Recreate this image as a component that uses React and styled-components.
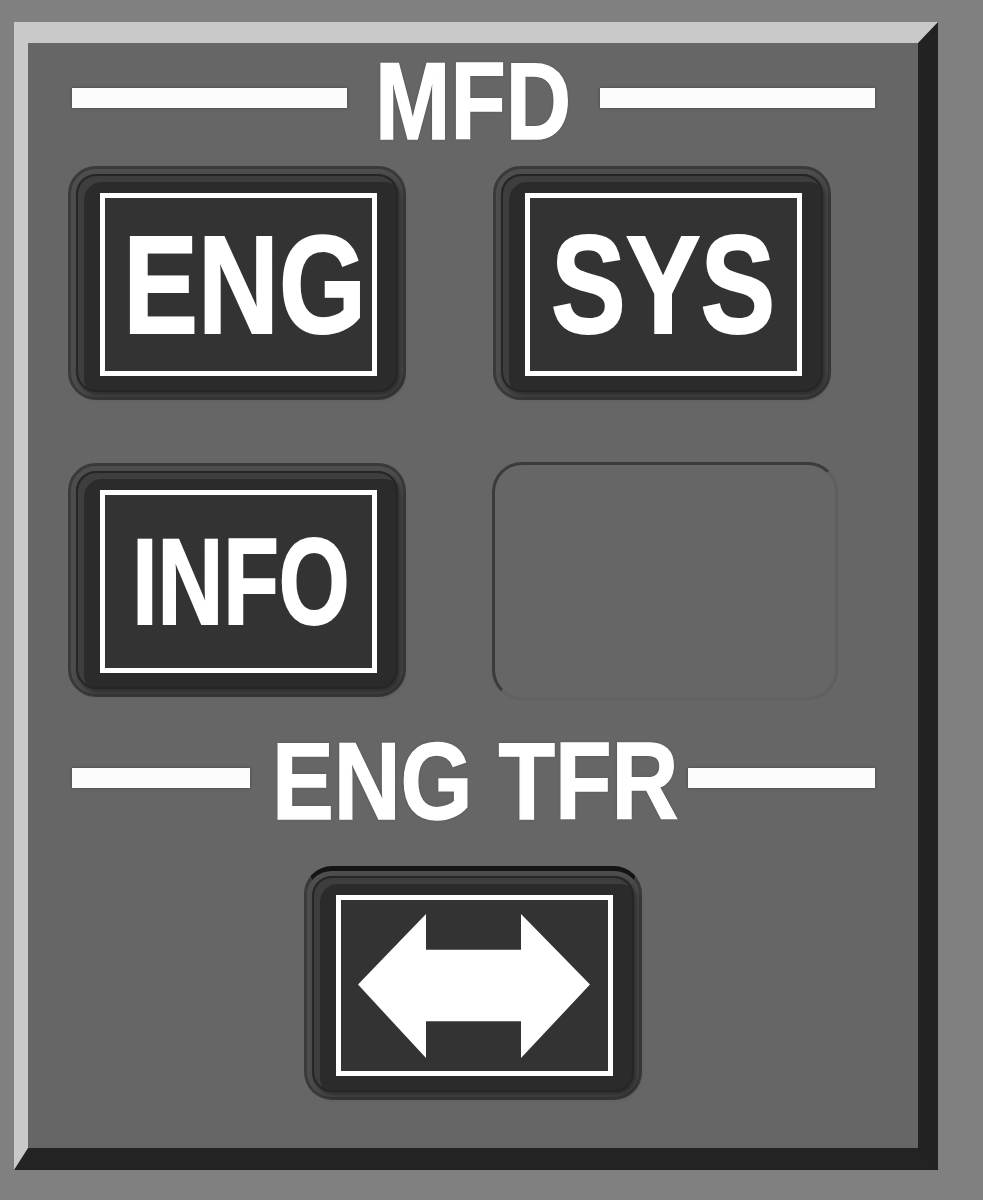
import styled, { createGlobalStyle } from "styled-components";

const GlobalStyle = createGlobalStyle`
  html, body {
    margin: 0;
    padding: 0;
    background: #808080;
  }
  body {
    font-family: "Liberation Sans", Arial, sans-serif;
  }
`;

const Panel = styled.div`
  box-sizing: border-box;
  width: 924px;
  height: 1148px;
  margin: 22px 0 0 14px;
  border-style: solid;
  border-width: 21px 20px 22px 14px;
  border-color: #c9c9c9 #222 #232323 #c9c9c9;
  background: #666;
  display: flex;
  flex-direction: column;
  padding-top: 19px;
`;

const Heading = styled.div`
  display: flex;
  align-items: center;
  height: 78px;
  padding: 0 43px 0 44px;
  margin-top: ${(p) => p.$top || 0}px;
`;

const Rule = styled.div`
  flex: 0 0 ${(p) => p.$w}px;
  height: 20px;
  margin-top: -7px;
  background: #fcfcfc;
  box-shadow: 0 0 3px rgba(0, 0, 0, 0.35);
`;

const TitleSlot = styled.div`
  flex: 1;
  min-width: 0;
  display: flex;
  justify-content: center;
`;

const Title = styled.span`
  font-size: 109px;
  line-height: 78px;
  font-weight: 700;
  color: #fff;
  white-space: nowrap;
  -webkit-text-stroke: 1.5px #fff;
  transform: translateX(${(p) => p.$shift || 0}px) scaleX(${(p) => p.$scale});
  text-shadow: 0 0 3px rgba(0, 0, 0, 0.4);
`;

const Keys = styled.div`
  display: grid;
  grid-template-columns: repeat(2, 338px);
  grid-auto-rows: 234px;
  column-gap: 87px;
  row-gap: 63px;
  padding-left: 40px;
  margin-top: 26px;
`;

const Bezel = styled.div`
  box-sizing: border-box;
  width: 338px;
  height: 234px;
  border-radius: 28px;
  border: 3px solid #3a3a3a;
  border-top: ${(p) => (p.$heavyTop ? "5px solid #141414" : "3px solid #3a3a3a")};
  padding: 5px;
  background: #4e4e4e;
  display: flex;
`;

const Body = styled.div`
  box-sizing: border-box;
  flex: 1;
  min-width: 0;
  display: flex;
  border-radius: 20px;
  border: 2px solid #262626;
  background: #2b2b2b;
  padding: 17px 19px 14px 22px;
  box-shadow: inset 6px 6px 0 #3e3e3e, 3px 4px 6px rgba(0, 0, 0, 0.45);
`;

const Frame = styled.div`
  box-sizing: border-box;
  flex: 1;
  min-width: 0;
  border: 5px solid #fff;
  background: #333;
  display: flex;
  align-items: center;
  justify-content: center;
  overflow: hidden;
`;

const Label = styled.span`
  font-size: ${(p) => p.$size}px;
  line-height: 1;
  font-weight: 700;
  color: #fff;
  white-space: nowrap;
  -webkit-text-stroke: 2px #fff;
  transform: translateX(${(p) => p.$shift || 0}px) scaleX(${(p) => p.$scale});
`;

const EmptySlot = styled.div`
  box-sizing: border-box;
  width: 346px;
  height: 238px;
  margin: -1px 0 0 -1px;
  border-radius: 30px;
  border: 3px solid;
  border-color: #3b3b3b #5f5f5f #616161 #3b3b3b;
`;

const TransferRow = styled.div`
  display: flex;
  justify-content: center;
  margin-top: 46px;
`;

const ArrowIcon = styled.svg`
  width: 100%;
  height: 100%;
  display: block;
`;

function Key({ children, heavyTop }) {
  return (
    <Bezel $heavyTop={heavyTop}>
      <Body>
        <Frame>{children}</Frame>
      </Body>
    </Bezel>
  );
}

export default function App() {
  return (
    <>
      <GlobalStyle />
      <Panel>
        <Heading>
          <Rule $w={275} />
          <TitleSlot>
            <Title $scale={0.83}>MFD</Title>
          </TitleSlot>
          <Rule $w={275} />
        </Heading>

        <Keys>
          <Key>
            <Label $size={140} $scale={0.8} $shift={6}>ENG</Label>
          </Key>
          <Key>
            <Label $size={140} $scale={0.8}>SYS</Label>
          </Key>
          <Key>
            <Label $size={123} $scale={0.74} $shift={2}>INFO</Label>
          </Key>
          <EmptySlot />
        </Keys>

        <Heading $top={45}>
          <Rule $w={178} />
          <TitleSlot>
            <Title $scale={0.85} $shift={6}>ENG TFR</Title>
          </TitleSlot>
          <Rule $w={187} />
        </Heading>

        <TransferRow>
          <Key heavyTop>
            <ArrowIcon viewBox="0 0 267 172" preserveAspectRatio="none">
              <path
                d="M17 85 L85 14 L85 50 L180 50 L180 14 L249 85 L180 159 L180 122 L85 122 L85 159 Z"
                fill="#fff"
              />
            </ArrowIcon>
          </Key>
        </TransferRow>
      </Panel>
    </>
  );
}
